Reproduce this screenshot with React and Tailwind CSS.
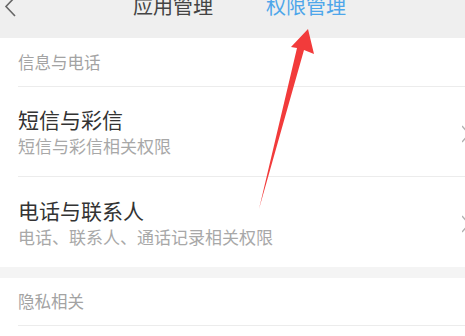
export default function App() {
  const font = { fontFamily: '"Noto Sans CJK SC", "Noto Sans", sans-serif' };
  const rows = [
    { title: '短信与彩信', sub: '短信与彩信相关权限' },
    { title: '电话与联系人', sub: '电话、联系人、通话记录相关权限' },
  ];

  return (
    <div className="relative w-[465px] h-[336px] overflow-hidden bg-white" style={font}>
      {/* top bar */}
      <div className="relative h-[38px] bg-[#efefef] flex items-start">
        <svg className="absolute left-[4px] top-[-4px]" width="14" height="22" viewBox="0 0 14 22">
          <polyline points="11,1 2,10.5 11,20" fill="none" stroke="#666" strokeWidth="1.6" />
        </svg>
        <div className="flex -mt-[6px] text-[20px] leading-[24px]">
          <span className="ml-[133px] text-[#444]">应用管理</span>
          <span className="ml-[53px] text-[#4ea6ea]">权限管理</span>
        </div>
      </div>

      {/* section: 信息与电话 */}
      <div className="pl-[18px]">
        <div className="h-[49px] flex items-center border-b border-[#ececec] text-[16.5px] text-[#a3a3a3]">
          信息与电话
        </div>
        {rows.map((r, i) => (
          <div
            key={r.title}
            className={`h-[90px] flex items-center ${i === 0 ? 'border-b border-[#ececec]' : ''}`}
          >
            <div className="flex-1 flex flex-col">
              <span className="text-[21px] leading-[26px] text-[#333]">{r.title}</span>
              <span className="mt-[3px] text-[17px] leading-[22px] text-[#a8a8a8]">{r.sub}</span>
            </div>
            <svg width="6" height="18" viewBox="0 0 6 18" className="-mr-[3px] mt-[4px]">
              <polyline points="0,1 7,9 0,17" fill="none" stroke="#b0b0b0" strokeWidth="1.4" />
            </svg>
          </div>
        ))}
      </div>

      <div className="h-[11px] bg-[#f4f4f4]" />

      {/* section: 隐私相关 */}
      <div className="pl-[18px]">
        <div className="h-[48px] flex items-center border-b border-[#ececec] text-[16.5px] text-[#a3a3a3]">
          隐私相关
        </div>
      </div>

      {/* red arrow annotation */}
      <svg className="absolute left-0 top-0 pointer-events-none" width="465" height="336" viewBox="0 0 465 336">
        <polygon
          points="308,29 314,54 304,50 259,209 297,48 291,47"
          fill="#f23b3b"
        />
      </svg>
    </div>
  );
}
